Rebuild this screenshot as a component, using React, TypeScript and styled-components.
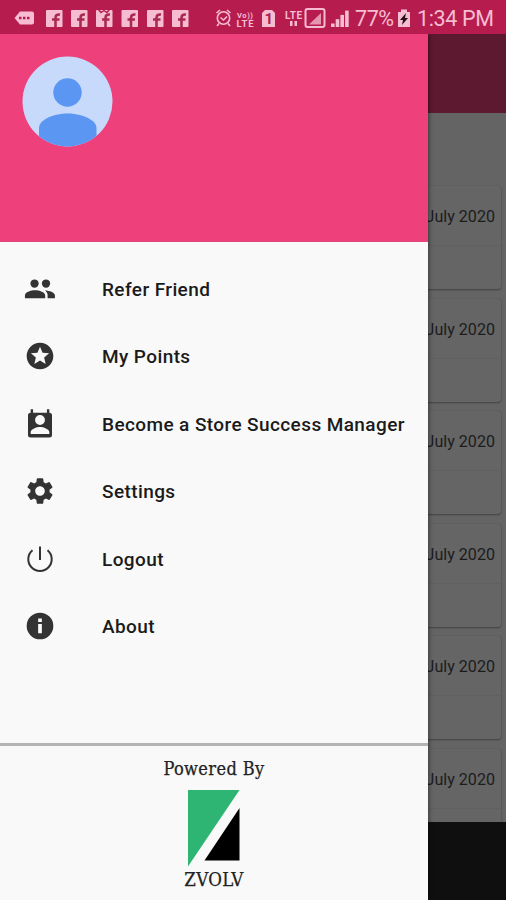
import React from "react";
import styled, { createGlobalStyle } from "styled-components";
import { MdSettings, MdStars } from "react-icons/md";

const GlobalStyle = createGlobalStyle`
  *, *::before, *::after { box-sizing: border-box; }
  body { margin: 0; background: #0f0f0f; font-family: Roboto, sans-serif; overflow: hidden; }
`;

const Phone = styled.div`
  display: flex;
  flex-direction: column;
  width: 506px;
  height: 900px;
  overflow: hidden;
`;

const StatusBar = styled.header`
  display: flex;
  flex: none;
  height: 34px;
  background: #b71c4f;
  color: #f6bdd2;
`;

const StatusArt = styled.svg`
  display: block;
  font-family: Roboto, sans-serif;
`;

const Body = styled.div`
  position: relative;
  flex: 1;
  min-height: 0;
`;

const Screen = styled.main`
  display: flex;
  flex-direction: column;
  height: 100%;
  background: #0f0f0f;
`;

const AppBar = styled.div`
  flex: none;
  height: 79px;
  background: #5d1930;
`;

const Feed = styled.div`
  display: flex;
  flex-direction: column;
  flex: none;
  gap: 9.5px;
  height: 709px;
  padding: 73px 5px 0 6px;
  overflow: hidden;
  background: #646464;
`;

const Card = styled.article`
  flex: none;
  height: 103px;
  border-radius: 3px;
  background: #656565;
  box-shadow: 0 1px 2px rgba(0, 0, 0, 0.35), 0 0 1px rgba(0, 0, 0, 0.2);
`;

const CardDate = styled.div`
  height: 60px;
  padding-right: 6px;
  border-bottom: 1px solid #606060;
  color: #1c1c1c;
  font-size: 16.1px;
  line-height: 61px;
  text-align: right;
`;

const Drawer = styled.aside`
  position: absolute;
  inset: 0 auto 0 0;
  display: flex;
  flex-direction: column;
  width: 428px;
  background: #f9f9f9;
  box-shadow: 0 0 5px rgba(0, 0, 0, 0.6);
  clip-path: inset(0 -10px 0 0);
`;

const Profile = styled.div`
  flex: none;
  height: 208px;
  padding: 22px;
  background: #ee417b;
  border-bottom: 1px solid #e0487a;
`;

const Avatar = styled.svg`
  display: block;
  width: 91px;
  height: 91px;
`;

const Menu = styled.nav`
  flex: 1;
  padding-top: 13.5px;
`;

const MenuItem = styled.a`
  display: flex;
  align-items: center;
  gap: 46px;
  height: 67.5px;
  padding-left: 24px;
  color: #1b1b1b;
  font-size: 19px;
  font-weight: 500;
  letter-spacing: 0.4px;
  white-space: nowrap;

  svg {
    flex: none;
    width: 32px;
    height: 32px;
    margin-top: -1px;
    color: #333;
  }
`;

const Footer = styled.footer`
  display: flex;
  flex: none;
  flex-direction: column;
  align-items: center;
  height: 157px;
  padding-top: 12px;
  border-top: 3px solid #b4b4b4;
  color: #222;
  font-family: "DejaVu Serif Condensed", "DejaVu Serif", serif;
  font-stretch: condensed;
`;

const Powered = styled.div`
  font-size: 18px;
  line-height: 22px;
  letter-spacing: 0.4px;
  -webkit-text-stroke: 0.25px currentColor;
`;

const Logo = styled.svg`
  display: block;
  flex: none;
  width: 52px;
  height: 77px;
  margin-top: 9.5px;
`;

const Brand = styled.div`
  margin-top: 2px;
  font-size: 18.5px;
  line-height: 22px;
  letter-spacing: 0.3px;
  -webkit-text-stroke: 0.25px currentColor;
`;

const PowerIcon = () => (
  <svg viewBox="0 0 32 32" fill="none" stroke="currentColor" strokeWidth="2">
    <path d="M16 3.500v13.500M8.500 7.200a11.700 11.700 0 1 0 15 0" />
  </svg>
);

const PeopleIcon = () => (
  <svg viewBox="0 0 24 24" fill="currentColor">
    <circle cx="7.900" cy="7.900" r="3.100" />
    <circle cx="16.500" cy="7.900" r="3.100" />
    <path d="M.7 19v-2.200C.7 14.500 5 13 8.300 13s7.600 1.500 7.600 3.800V19zM17.700 19v-2.500c0-1.400-.8-2.600-1.900-3.400 3.100.1 7.400 1.400 7.400 3.700V19z" />
  </svg>
);

const ContactIcon = () => (
  <svg viewBox="0 0 24 24" fill="currentColor" fillRule="evenodd">
    <path d="M19 3.500V1h-1.800v2.500H6.800V1H5v2.500c-1.100 0-2 .7-2 1.700v15.300c0 1 .9 1.700 2 1.700h14c1.100 0 2-.7 2-1.700V5.200c0-1-.9-1.700-2-1.700zM12 5.300a3.700 3.700 0 1 1 0 7.400 3.700 3.700 0 0 1 0-7.400zM5 19.500v-1.300C5 15.800 9.500 14.300 12 14.300s7 1.500 7 3.900v1.300z" />
  </svg>
);

const InfoIcon = () => (
  <svg viewBox="0 0 24 24" fill="currentColor" fillRule="evenodd">
    <path d="M12 2a10 10 0 1 0 0 20 10 10 0 0 0 0-20zM10.600 10.500h2.800v7h-2.800zM10.600 6.300h2.800V9h-2.800z" />
  </svg>
);

const facebookSlots = [46, 71, 96, 121.5, 147, 172];
const signalBars = [0, 1, 2, 3];

const StatusIcons = () => (
  <StatusArt width="506" height="34" viewBox="0 0 506 34" fill="currentColor">
    <path d="M14.500 18 20 11.500h12a2 2 0 0 1 2 2v9a2 2 0 0 1-2 2H20z" />
    <path d="M19 18h2.500m1.500 0h2.500m1.500 0h2.500" stroke="#b71c4f" strokeWidth="2.500" />
    {facebookSlots.map((x, i) => (
      <g key={x}>
        <rect x={x} y="10" width="16.500" height="17" rx="1" />
        <path
          d={`M${x + 9.5} 27v-9q0-4 4.500-3.500M${x + 6} 19.500h7.500`}
          fill="none"
          stroke="#a92a50"
          strokeWidth="2.600"
        />
        {i === 2 && (
          <path d={`M${x + 2} 9l3 3.500 3-2 3 2 3-3.500`} fill="none" stroke="#b71c4f" strokeWidth="1.400" />
        )}
      </g>
    ))}
    <g fill="none" stroke="currentColor" strokeWidth="1.600">
      <circle cx="223.500" cy="18" r="6.200" />
      <path d="m220.500 17.500 3 2.500 3.500-3.500M216.500 13l3.500-3M230.500 13l-3.500-3M219 23.500l-2 2.500M228 23.500l2 2.500" />
    </g>
    <g fontWeight="700">
      <text x="237" y="17.500" fontSize="7.500" textLength="16">Vo))</text>
      <text x="236.500" y="27" fontSize="9.500" textLength="17">LTE</text>
      <text x="285" y="18.500" fontSize="10" textLength="17">LTE</text>
    </g>
    <path d="M265 10h7l3 3v14h-13V13z" />
    <text x="264.400" y="24" fill="#a91f4a" fontSize="15" fontWeight="700">1</text>
    <path d="M290 21h2.500v5H290zM294.500 21h2.500v5h-2.500z" />
    <rect x="305.500" y="9" width="19" height="18" rx="2" fill="none" stroke="currentColor" strokeWidth="2" />
    <path d="M309 24.500 321 13v11.500z" opacity=".75" />
    {signalBars.map((i) => (
      <rect key={i} x={331 + i * 4.7} y={23.5 - i * 4.3} width="3.600" height={3.5 + i * 4.3} />
    ))}
    <text x="355" y="26.200" fontSize="21.500" textLength="39">77%</text>
    <path d="M398 12h3v-2.500h6V12h3v15h-12z" />
    <path d="m406 13-6 7h3l-1 5 6-7h-3z" fill="#251018" />
    <text x="417" y="26.200" fontSize="21.500" textLength="77">1:34 PM</text>
  </StatusArt>
);

const menuItems = [
  { label: "Refer Friend", Icon: PeopleIcon },
  { label: "My Points", Icon: MdStars },
  { label: "Become a Store Success Manager", Icon: ContactIcon },
  { label: "Settings", Icon: MdSettings },
  { label: "Logout", Icon: PowerIcon },
  { label: "About", Icon: InfoIcon },
];

const feedDates = Array.from({ length: 6 }, (_, id) => ({ id, date: "July 2020" }));

export default function App() {
  return (
    <>
      <GlobalStyle />
      <Phone>
        <StatusBar>
          <StatusIcons />
        </StatusBar>
        <Body>
          <Screen>
            <AppBar />
            <Feed>
              {feedDates.map(({ id, date }) => (
                <Card key={id}>
                  <CardDate>{date}</CardDate>
                </Card>
              ))}
            </Feed>
          </Screen>
          <Drawer>
            <Profile>
              <Avatar viewBox="0 0 91 91">
                <defs>
                  <clipPath id="avatar-clip">
                    <circle cx="45.500" cy="45.500" r="45" />
                  </clipPath>
                </defs>
                <g clipPath="url(#avatar-clip)">
                  <rect width="91" height="91" fill="#c7dafc" />
                  <circle cx="45.500" cy="36.500" r="14.200" fill="#5b96f3" />
                  <path d="M17 91V72c0-8 14-14.500 28.500-14.500S74.500 64 74.500 72v19z" fill="#5b96f3" />
                </g>
              </Avatar>
            </Profile>
            <Menu>
              {menuItems.map(({ label, Icon }) => (
                <MenuItem key={label}>
                  <Icon />
                  {label}
                </MenuItem>
              ))}
            </Menu>
            <Footer>
              <Powered>Powered By</Powered>
              <Logo viewBox="0 0 52 77">
                <path d="M0 0h51.500L0 76.500z" fill="#2fb573" />
                <path d="M51.500 18v52.500H16.500z" fill="#000" />
              </Logo>
              <Brand>ZVOLV</Brand>
            </Footer>
          </Drawer>
        </Body>
      </Phone>
    </>
  );
}
